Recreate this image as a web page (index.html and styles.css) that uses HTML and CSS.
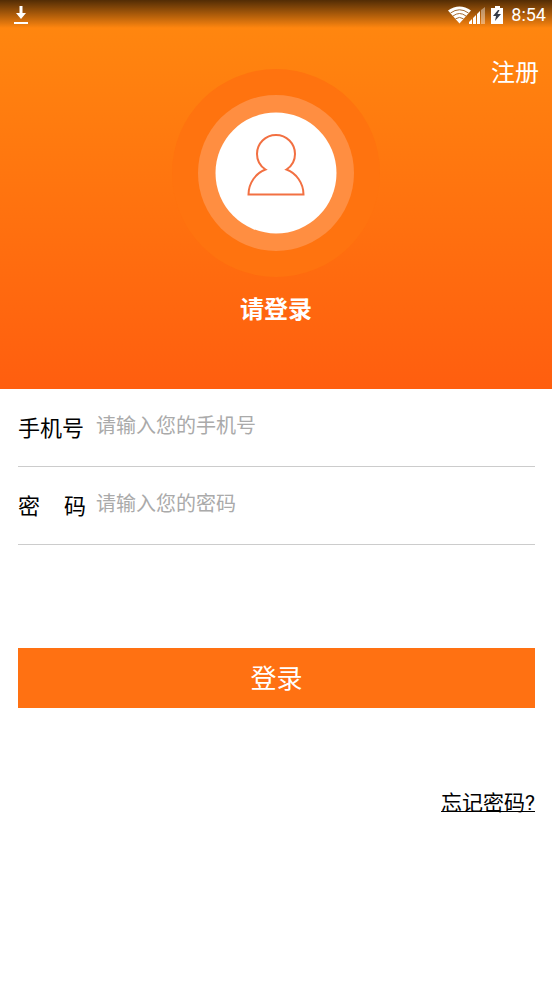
FILE: index.html
```html
<!DOCTYPE html>
<html lang="zh-CN">
<head>
<meta charset="utf-8">
<meta name="viewport" content="width=device-width, initial-scale=1">
<title>登录</title>
<link rel="stylesheet" href="styles.css">
</head>
<body>
<header class="hero">
  <div class="status-bar">
    <svg class="download" width="16" height="20" viewBox="0 0 16 20" aria-hidden="true">
      <path d="M6.500 1h3v7H13l-5 6-5-6h3.500zM1 17h14v2H1z" fill="#fff"/>
    </svg>
    <div class="status-icons">
      <svg width="58" height="18" viewBox="0 0 58 18" aria-hidden="true">
        <path d="M0 4.500Q11.500 -3.500 23 4.500L11.500 17.500z" fill="#fff"/>
        <path d="M2.500 7Q11.500 0.500 20.500 7M5 10Q11.500 5 18 10M7.500 12.800Q11.500 10 15.500 12.800" fill="none" stroke="#a5692f" stroke-width="1"/>
        <path d="M21 18v-2l3-3v5zM25 18v-6l3-3v9zM29 18V8l3-3v13z" fill="#fff"/>
        <path d="M33 18V4l4-3v17z" fill="#fff" opacity=".4"/>
        <path d="M43 2h4V0h5v2h3v16H43z" fill="#fff"/>
        <path d="M50 4l-5 6h3l-1 5 6-7h-3.500l2-4z" fill="#343b48"/>
      </svg>
      <span>8:54</span>
    </div>
  </div>
  <a class="register" href="#">注册</a>
  <svg class="avatar" width="208" height="208" viewBox="0 0 208 208" aria-hidden="true">
    <circle cx="104" cy="104" r="104" fill="#ff730f"/>
    <circle cx="104" cy="104" r="78" fill="#ff8e41"/>
    <circle cx="104" cy="104" r="60.500" fill="#fff"/>
    <path d="M93.500 100.500C88 97 85 91 85 85a19 19 0 0 1 38 0c0 6-3 12-8.500 15.500C124 104 131.500 114 131.500 125.500h-55C76.500 114 84 104 93.500 100.500z" fill="none" stroke="#f27042" stroke-width="2"/>
  </svg>
  <h1 class="title">请登录</h1>
</header>
<form class="login">
  <div class="field">
    <label for="phone">手机号</label>
    <input id="phone" type="tel" placeholder="请输入您的手机号">
  </div>
  <div class="field">
    <label for="password"><span>密</span><span>码</span></label>
    <input id="password" type="password" placeholder="请输入您的密码">
  </div>
  <button class="submit" type="submit">登录</button>
  <a class="forgot" href="#">忘记密码?</a>
</form>
</body>
</html>
```
FILE: styles.css
```css
* {
  box-sizing: border-box;
}

body {
  margin: 0;
  background: #fff;
  color: #000;
  font-family: Roboto, "Noto Sans CJK SC", sans-serif;
}

.hero {
  display: flex;
  flex-direction: column;
  align-items: center;
  padding-bottom: 61px;
  background:
    linear-gradient(rgba(0, 0, 0, .68), rgba(0, 0, 0, 0) 28px),
    linear-gradient(#ff890f, #ff5e0f);
}

.status-bar {
  display: flex;
  align-items: center;
  justify-content: space-between;
  width: 100%;
  height: 29px;
  padding: 0 6px 0 13px;
  color: #fff;
}

.status-icons {
  display: flex;
  align-items: center;
  gap: 5px;
  font-size: 18px;
  line-height: 29px;
}

.register {
  align-self: flex-end;
  margin: 26px 13px 0 0;
  color: #fff;
  font-size: 24px;
  line-height: 36px;
  text-decoration: none;
}

/* The halo reaches up beside the register link. */
.avatar {
  margin-top: -22px;
}

.title {
  margin: 15px 0 0;
  color: #fff;
  font-size: 24px;
  font-weight: 700;
  line-height: 36px;
}

.login {
  display: flex;
  flex-direction: column;
  padding: 0 17px 0 18px;
}

.field {
  display: flex;
  align-items: center;
  gap: 10px;
  height: 78px;
  border-bottom: 1px solid #ccc;
}

.field label {
  display: flex;
  justify-content: space-between;
  width: 68px;
  padding-top: 2px;
  font-size: 22px;
  line-height: 34px;
}

.field input {
  flex: 1;
  min-width: 0;
  padding: 0 0 4px;
  border: 0;
  outline: 0;
  background: none;
  color: #000;
  font-family: inherit;
  font-size: 20px;
  line-height: 30px;
}

.field input::placeholder {
  color: #aaa;
  opacity: 1;
}

.submit {
  height: 60px;
  margin-top: 103px;
  padding: 0 0 4px;
  border: 0;
  background: #ff7112;
  color: #fff;
  font-family: inherit;
  font-size: 26px;
}

.forgot {
  align-self: flex-end;
  margin-top: 80px;
  color: #000;
  font-size: 21px;
  line-height: 30px;
  text-decoration: underline;
  text-decoration-thickness: 1px;
}
```
